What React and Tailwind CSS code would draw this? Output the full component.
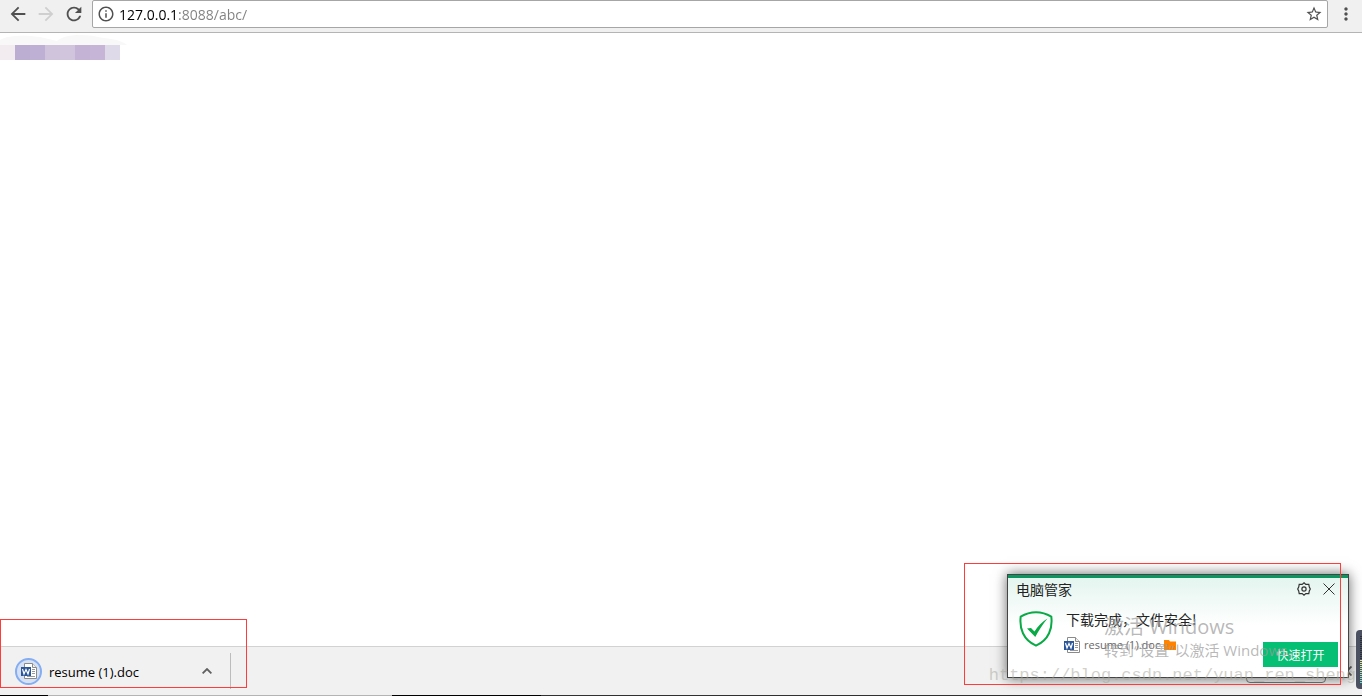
import { MdArrowBack, MdArrowForward, MdMoreVert, MdOutlineInfo, MdRefresh, MdStarBorder } from "react-icons/md";

const mosaic = ["bg-[#f2ecf1]", "bg-[#bcadd3]", "bg-[#beb0d4]", "bg-[#d0c4dc]", "bg-[#d1c5dd]", "bg-[#c5b3d6]", "bg-[#c7b5d7]", "bg-[#dedaea]"];

function WordIcon() {
  return (
    <svg viewBox="0 0 16 16" className="size-4 shrink-0" aria-hidden="true">
      <path d="M3.5 .5h8l4 4v11h-12z" fill="#fff" stroke="#8a8a8a" />
      <path d="M11.5 .5v4h4" fill="#eee" stroke="#8a8a8a" />
      <path d="M11 6.5h3M11 8.5h3M11 10.5h3M6 13.5h8" stroke="#999" />
      <path d="M0 4h10v9H0z" fill="#2b579a" />
      <path d="M1.500 6l1.500 5 2-4.500 2 4.500 1.500-5" fill="none" stroke="#fff" strokeWidth="1.200" />
    </svg>
  );
}

function Toolbar() {
  return (
    <header className="flex h-[33px] items-start border-b border-[#b4b4b4] bg-[#f0f0f0] text-[#505050]">
      <div className="flex h-7 w-[92px] shrink-0 items-center gap-1.5 pl-[7px]">
        <button type="button" aria-label="Back">
          <MdArrowBack className="size-[22px]" />
        </button>
        <button type="button" aria-label="Forward" className="text-[#cfcfcf]">
          <MdArrowForward className="size-[22px]" />
        </button>
        <button type="button" aria-label="Reload">
          <MdRefresh className="size-[22px]" />
        </button>
      </div>
      <div className="flex h-7 flex-1 items-center rounded-xs border border-[#a6a6a6] bg-white px-1">
        <MdOutlineInfo className="size-[18px] shrink-0" />
        <input
          type="text"
          aria-label="Address"
          defaultValue="127.0.0.1:8088/abc/"
          className="ml-1 h-6 min-w-0 flex-1 bg-linear-to-r from-black from-[59px] to-[#808080] to-[59px] bg-clip-text font-['Open_Sans',sans-serif] text-sm text-transparent outline-none"
        />
        <button type="button" aria-label="Bookmark">
          <MdStarBorder className="size-[18px]" />
        </button>
      </div>
      <button type="button" aria-label="Menu" className="flex h-7 w-[34px] items-center justify-center pl-0.5">
        <MdMoreVert className="size-5" />
      </button>
    </header>
  );
}

function DownloadBar() {
  return (
    <footer className="border-t border-[#d2d2d2] bg-[#f1f1f1]">
      <div className="flex h-12 items-start justify-between pt-1.5">
        <div className="flex h-9 w-[231px] items-center border-r border-[#bcbcbc] pl-[15px]">
          <a href="#resume" className="flex items-center gap-[7px] font-['Open_Sans',sans-serif] text-[13px] text-black">
            <span className="flex size-[27px] items-center justify-center rounded-full border-2 border-[#84adf2] bg-[#d6e1f4]">
              <WordIcon />
            </span>
            <span className="pt-1">resume (1).doc</span>
          </a>
          <button type="button" aria-label="Download options" className="mr-[18px] ml-auto text-[#606060]">
            <svg viewBox="0 0 10 6" className="h-1.5 w-2.5" fill="none" stroke="currentColor" strokeWidth="1.8">
              <path d="M.6 5.4L5 1l4.400 4.400" />
            </svg>
          </button>
        </div>
        <div className="flex items-center gap-4 pt-1.5 pr-2.5">
          <button type="button" aria-label="Show all" className="h-6 w-20 rounded-sm border border-[#777]" />
          <button type="button" aria-label="Close downloads" className="text-[#606060]">
            <svg viewBox="0 0 10 10" className="size-2.5" stroke="currentColor" strokeWidth="1.800">
              <path d="M.5 .5l9 9M9.500 .5l-9 9" />
            </svg>
          </button>
        </div>
      </div>
      <div className="flex h-px bg-[#303030]">
        <div className="w-12 bg-black" />
        <div className="w-[344px] bg-[#b4b4b4]" />
        <div className="w-[149px] bg-black" />
      </div>
    </footer>
  );
}

function Notification() {
  return (
    <section className="absolute right-[13px] bottom-[18px] flex h-[104px] w-[342px] flex-col border border-[#444] bg-linear-to-b from-[#e2f4ee] to-white to-50% font-['Noto_Sans_CJK_SC',sans-serif] text-[#222] shadow-[0_0_12px_rgba(0,0,0,0.6)]">
      <div className="h-[3px] bg-[#0b9660]" />
      <div className="flex h-[22px] items-center pr-[13px] pl-2">
        <h2 className="flex-1 text-sm">电脑管家</h2>
        <button type="button" aria-label="Settings" className="mr-3">
          <svg viewBox="0 0 14 14" className="size-3.5" fill="none" stroke="#333" strokeWidth="1.2">
            <path d="M7 .8l1.800 1.600h3l.5 2.600L13.300 7l-1 2-.5 2.600h-3L7 13.200 5.200 11.600h-3L1.700 9l-1-2 1-2 .5-2.600h3z" />
            <circle cx="7" cy="7" r="2.100" />
          </svg>
        </button>
        <button type="button" aria-label="Close">
          <svg viewBox="0 0 12 12" className="size-3" fill="none" stroke="#333">
            <path d="M.5 .5l11 11M11.500 .5l-11 11" />
          </svg>
        </button>
      </div>
      <div className="flex flex-1 pl-[11px]">
        <svg viewBox="0 0 34 36" className="mt-[11px] h-9 w-[34px] shrink-0" aria-hidden="true">
          <path d="M17 1.200C12.500 1.200 6 3 1.700 5.600 .3 17 4 29 17 34.600 30 29 33.700 17 32.300 5.600 28 3 21.500 1.200 17 1.200z" fill="none" stroke="#09aa46" strokeWidth="2" />
          <path d="M8 17.500l4-.5 3.500 3.500C19 15 23.500 10.500 28.500 7.500 24 13 19.500 19.500 16.300 26z" fill="#09aa46" />
        </svg>
        <div className="pt-[7px] pl-[11px]">
          <p className="pl-0.5 text-sm leading-6">下载完成，文件安全!</p>
          <a href="#resume" className="flex h-7 items-center gap-1 font-['Open_Sans',sans-serif] text-[11px] text-[#666]">
            <WordIcon />
            resume (1).doc
            <svg viewBox="0 0 12 10" className="h-2.5 w-3" aria-hidden="true">
              <path d="M0 0h5l1 1.500h6V10H0z" fill="#ff8200" />
            </svg>
          </a>
        </div>
      </div>
      <button type="button" className="absolute right-2.5 bottom-2.5 h-[25px] w-[75px] bg-[#05c074] text-xs text-white">
        快速打开
      </button>
    </section>
  );
}

export default function App() {
  return (
    <div className="relative flex min-h-screen flex-col overflow-hidden bg-white">
      <Toolbar />
      <main className="flex-1">
        <svg viewBox="0 0 127 12" className="h-3 w-[127px]" aria-hidden="true">
          <path d="M0 12V7C8 2 25 2 40 4l17 4C65 1 85 1 98 4c10 2 22 2 29 8z" fill="#f8f8f8" />
        </svg>
        <div className="flex">
          {mosaic.map((color) => (
            <div key={color} className={`h-[15px] w-[15px] ${color}`} />
          ))}
        </div>
      </main>
      <DownloadBar />
      <Notification />
      <div className="pointer-events-none absolute right-0 bottom-[35px] w-[258px] font-['Open_Sans','Noto_Sans_CJK_SC',sans-serif] whitespace-nowrap text-[#999]/70">
        <p className="text-xl leading-6">激活 Windows</p>
        <p className="text-[15px] leading-[22px]">转到“设置”以激活 Windows。</p>
      </div>
      <p className="pointer-events-none absolute right-1.5 bottom-2 font-['Liberation_Mono',monospace] text-[17px] leading-6 text-[#a4a498]/50">
        https://blog.csdn.net/yuan_ren_sheng
      </p>
      <div className="pointer-events-none absolute bottom-2 left-0 h-[69px] w-[247px] border border-[#ff3b3b]" />
      <div className="pointer-events-none absolute right-[21px] bottom-[11px] h-[122px] w-[377px] border border-[#ff3b3b]" />
      <div className="absolute right-0 bottom-[7px] h-[59px] w-1.5 rounded-l bg-[#4b5160] py-1.5 pl-1">
        <div className="h-6 bg-[repeating-linear-gradient(#29303b_0_1px,#4b5160_1px_2px)]" />
        <div className="h-6 bg-linear-to-b from-[#dfe889] to-[#63d8d0]">
          <div className="h-full bg-[repeating-linear-gradient(transparent_0_1px,#4b5160_1px_2px)]" />
        </div>
      </div>
    </div>
  );
}
